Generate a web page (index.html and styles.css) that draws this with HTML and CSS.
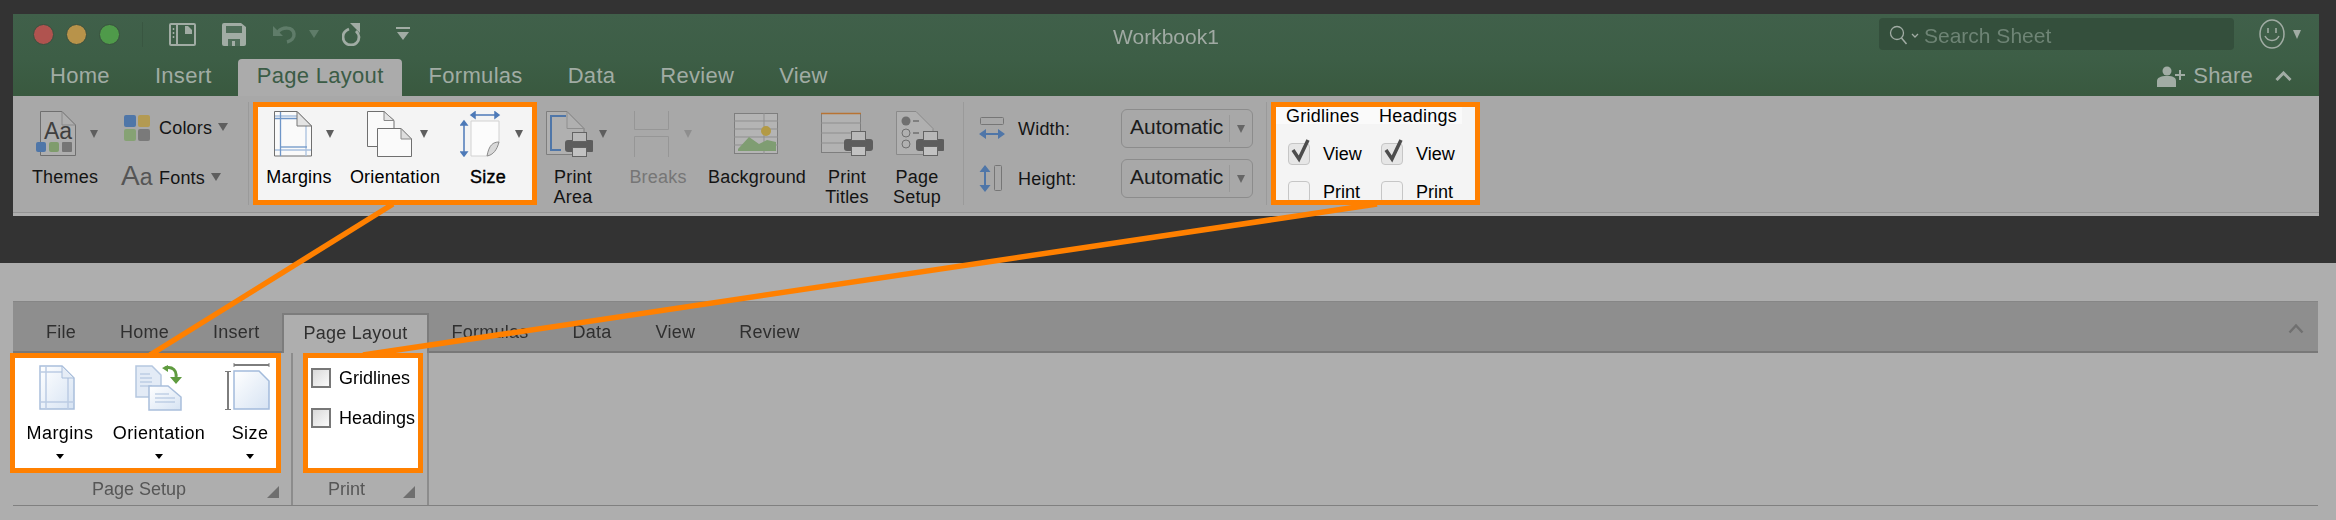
FILE: index.html
```html
<!DOCTYPE html>
<html lang="en">
<head>
<meta charset="utf-8">
<title>Excel for Mac and Windows ribbon comparison</title>
<link rel="stylesheet" href="styles.css">
</head>
<body>
<div class="page">

  <section class="mac">
    <header class="titlebar">
      <div class="title-left">
        <span class="light light-red"></span>
        <span class="light light-yellow"></span>
        <span class="light light-green"></span>
        <span class="title-divider"></span>
        <svg class="qa qa-sidebar" width="27" height="23" viewBox="0 0 27 23"><path d="M2 1h23a1 1 0 0 1 1 1v19a1 1 0 0 1-1 1H2a1 1 0 0 1-1-1V2a1 1 0 0 1 1-1z" fill="none" stroke="#a1aca4" stroke-width="2"/><path d="M8 1v21" stroke="#a1aca4" stroke-width="2"/><path d="M4.500 5v2M4.500 9v2M4.500 13v2" stroke="#a1aca4" stroke-width="1.500"/><path d="M16 3h3l4 4v4h-7z" fill="#a1aca4"/></svg>
        <svg class="qa qa-save" width="24" height="23" viewBox="0 0 24 23"><path d="M2 0h17l5 4v17a2 2 0 0 1-2 2H2a2 2 0 0 1-2-2V2a2 2 0 0 1 2-2z" fill="#a1aca4"/><rect x="4" y="3" width="16" height="7" fill="#4f6d59"/><rect x="6" y="16" width="12" height="7" fill="#4f6d59"/><rect x="10" y="18" width="3" height="5" fill="#a1aca4"/></svg>
        <svg class="qa qa-undo" width="25" height="19" viewBox="0 0 25 19"><path d="M1 1v10h10z" fill="#5f7c69"/><path d="M6 7c4-5 15-6 16 2 .5 4-3 7-7 8" fill="none" stroke="#5f7c69" stroke-width="3.500"/></svg>
        <span class="tri tri-undo"></span>
        <svg class="qa qa-redo" width="20" height="23" viewBox="0 0 20 23"><path d="M8 0h10v10z" fill="#a1aca4"/><path d="M7 6C2 8 1 11 1 14a8 8 0 0 0 16 0c0-3-2-5-3-6" fill="none" stroke="#a1aca4" stroke-width="2.800"/></svg>
        <svg class="qa qa-custom" width="14" height="14" viewBox="0 0 14 14"><path d="M0 1h14" stroke="#a1aca4" stroke-width="2"/><path d="M1 5h12l-6 8z" fill="#a1aca4"/></svg>
      </div>
      <div class="doc-title">Workbook1</div>
      <div class="title-right">
        <div class="search">
          <svg class="search-glass" width="20" height="20" viewBox="0 0 20 20"><circle cx="8" cy="8" r="6.500" fill="none" stroke="#a1aca4" stroke-width="1.300"/><path d="M12.500 13l5 6" stroke="#a1aca4" stroke-width="1.500"/></svg>
          <svg class="search-chev" width="8" height="6" viewBox="0 0 8 6"><path d="M1 1l3 3 3-3" fill="none" stroke="#a1aca4" stroke-width="1.300"/></svg>
          <span class="search-text">Search Sheet</span>
        </div>
        <svg class="smiley" width="26" height="30" viewBox="0 0 26 30"><ellipse cx="13" cy="15" rx="12" ry="14" fill="none" stroke="#a1aca4" stroke-width="1.500"/><path d="M9 9v5M17 9v5" stroke="#a1aca4" stroke-width="1.600"/><path d="M6 17c3 6 11 6 14 0" fill="none" stroke="#a1aca4" stroke-width="1.500"/></svg>
        <span class="tri tri-smiley"></span>
      </div>
    </header>

    <nav class="mac-tabs">
      <span class="mac-tab">Home</span>
      <span class="mac-tab">Insert</span>
      <span class="mac-tab mac-tab-active">Page Layout</span>
      <span class="mac-tab">Formulas</span>
      <span class="mac-tab">Data</span>
      <span class="mac-tab">Review</span>
      <span class="mac-tab">View</span>
      <div class="share">
        <svg width="28" height="21" viewBox="0 0 28 21"><circle cx="10" cy="5" r="4.500" fill="#a1aca4"/><path d="M0 21v-6c0-3 3-5 10-5s9 2 9 5v6z" fill="#a1aca4"/><path d="M18 9h10M23 4v10" stroke="#a1aca4" stroke-width="2"/></svg>
        <span class="share-text">Share</span>
        <svg class="share-chev" width="17" height="10" viewBox="0 0 17 10"><path d="M1.500 9l7-7 7 7" fill="none" stroke="#a1aca4" stroke-width="3"/></svg>
      </div>
    </nav>

    <div class="ribbon">
      <div class="themes-group">
        <div class="tool tool-themes">
          <div class="tool-art">
            <svg width="40" height="46" viewBox="0 0 40 46"><path d="M4.500.5H26L39.500 14v30.500h-35z" fill="#aeaeae" stroke="#6f6f6f"/><path d="M26 .5V14h13.500" fill="none" stroke="#8a8a8a"/><text x="8" y="28" class="svg-aa">Aa</text><rect x="0" y="31" width="10" height="10" rx="2" fill="#4f76a8"/><rect x="13" y="31" width="10" height="10" rx="2" fill="#7f9c6c"/><rect x="26" y="31" width="10" height="10" rx="1" fill="#767676"/></svg>
            <span class="tri"></span>
          </div>
          <div class="tool-label">Themes</div>
        </div>
        <div class="theme-rows">
          <div class="theme-row">
            <span class="theme-icon">
              <svg width="26" height="26" viewBox="0 0 26 26"><rect width="12" height="12" rx="2" fill="#4f76a8"/><rect x="14" width="12" height="12" rx="2" fill="#b39a52"/><rect y="14" width="12" height="12" rx="2" fill="#86a274"/><rect x="14" y="14" width="12" height="12" rx="2" fill="#7a7a7a"/></svg>
            </span>
            <span class="theme-text">Colors</span><span class="tri tri-small"></span>
          </div>
          <div class="theme-row">
            <span class="theme-icon theme-aa"><span class="aa-big">A</span><span class="aa-small">a</span></span>
            <span class="theme-text">Fonts</span><span class="tri tri-small"></span>
          </div>
        </div>
      </div>
      <span class="vsep"></span>

      <div class="hl hl-page">
        <div class="tool tool-margins">
          <div class="tool-art">
            <svg width="38" height="46" viewBox="0 0 38 46"><path d="M.5.500H23L37.500 15v30H.500z" fill="#fafafa" stroke="#6f6f6f"/><path d="M1 5h23M1 39h36" stroke="#a9c1df" stroke-width="1.500"/><path d="M1 7.500h24" stroke="#6f96c8" stroke-width="1.500"/><path d="M6.500 1v44" stroke="#6f96c8" stroke-width="1.300"/><path d="M32 15v30" stroke="#a9c1df" stroke-width="1.300"/><path d="M6 36h27" stroke="#6f96c8" stroke-width="1.300"/><path d="M23 .5v14.500h14.500z" fill="#e4e4e4" stroke="#777"/></svg>
            <span class="tri"></span>
          </div>
          <div class="tool-label">Margins</div>
        </div>
        <div class="tool tool-orient">
          <div class="tool-art">
            <svg width="45" height="46" viewBox="0 0 45 46"><path d="M.5.500H17l10 9v26H.500z" fill="#fafafa" stroke="#6f6f6f"/><path d="M17 .5v9h10z" fill="#e4e4e4" stroke="#888"/><path d="M10.500 17.500H34l10.500 10.500v17.500H10.500z" fill="#fafafa" stroke="#6f6f6f"/><path d="M34 17.500V28h10.500z" fill="#dedede" stroke="#888"/></svg>
            <span class="tri"></span>
          </div>
          <div class="tool-label">Orientation</div>
        </div>
        <div class="tool tool-size">
          <div class="tool-art">
            <svg width="46" height="46" viewBox="0 0 46 46"><path d="M11 4h28M11 4l4-3v6zM39 4l-4-3v6z" fill="#4d7ab8" stroke="#4d7ab8" stroke-width="1.500"/><path d="M4 10v35M4 10l-3 4h6zM4 45l-3-4h6z" fill="#4d7ab8" stroke="#4d7ab8" stroke-width="1.500"/><path d="M11 10h28v21L27 45H11z" fill="#fcfcfc" stroke="#d2d2d2"/><path d="M39 31c-6 0-10 3-12 14 6-1 10-6 12-14z" fill="#d8d8d8" stroke="#8a8a8a"/></svg>
            <span class="tri"></span>
          </div>
          <div class="tool-label tool-label-strong">Size</div>
        </div>
      </div>

      <div class="tool tool-parea">
        <div class="tool-art">
          <svg width="47" height="46" viewBox="0 0 47 46"><path d="M.5.500H21l17 17v26H.500z" fill="#b0b0b0" stroke="#7e7e7e"/><path d="M21 .5v17h17" fill="none" stroke="#8e8e8e"/><path d="M20 5H5v34h10" fill="none" stroke="#4f76a8" stroke-width="2"/><use href="#printer" x="19" y="21"/></svg>
          <span class="tri"></span>
        </div>
        <div class="tool-label">Print<br>Area</div>
      </div>
      <div class="tool tool-breaks">
        <div class="tool-art">
          <svg width="36" height="46" viewBox="0 0 36 46"><path d="M.5 0v18.500h34V0" fill="none" stroke="#969696"/><path d="M.5 46V25.500h34V46" fill="none" stroke="#969696"/></svg>
          <span class="tri tri-dim"></span>
        </div>
        <div class="tool-label tool-label-dim">Breaks</div>
      </div>
      <div class="tool tool-bg">
        <div class="tool-art">
          <svg width="45" height="42" viewBox="0 0 45 42"><rect x=".5" y=".5" width="43" height="40" fill="#b4b4b4" stroke="#7e7e7e"/><path d="M0 8h44M0 16h44M0 24h44M0 32h44M30 0v41" stroke="#8f8f8f"/><path d="M4 36l11-12 10 7 8-4 9 2v9H4z" fill="#7f9d72"/><circle cx="32" cy="18" r="5" fill="#b39a45"/></svg>
        </div>
        <div class="tool-label">Background</div>
      </div>
      <div class="tool tool-ptitles">
        <div class="tool-art">
          <svg width="52" height="46" viewBox="0 0 52 46"><rect x=".5" y="2.500" width="39" height="39" fill="#b2b2b2" stroke="#7e7e7e"/><path d="M0 2.500h40" stroke="#b87333" stroke-width="1.500"/><path d="M0 12h40M0 22h40M0 32h40" stroke="#8e8e8e"/><use href="#printer" x="23" y="20"/></svg>
        </div>
        <div class="tool-label">Print<br>Titles</div>
      </div>
      <div class="tool tool-psetup">
        <div class="tool-art">
          <svg width="48" height="46" viewBox="0 0 48 46"><path d="M.5.500H20l17 17v26H.500z" fill="#b0b0b0" stroke="#8a8a8a"/><circle cx="10" cy="10" r="4.500" fill="#6f6f6f"/><circle cx="10" cy="22" r="4" fill="none" stroke="#6f6f6f"/><circle cx="10" cy="33" r="4" fill="none" stroke="#6f6f6f"/><path d="M17 10h6M17 22h6" stroke="#6f6f6f" stroke-width="1.500"/><use href="#printer" x="20" y="20"/></svg>
        </div>
        <div class="tool-label">Page<br>Setup</div>
      </div>
      <span class="vsep vsep-size"></span>

      <div class="size-group">
        <div class="size-row">
          <svg width="26" height="23" viewBox="0 0 26 23"><rect x="1.500" y=".5" width="23" height="7" rx="1" fill="none" stroke="#767676"/><path d="M3 17h20" stroke="#4f76a8" stroke-width="2"/><path d="M0 17l7-5v10zM26 17l-7-5v10z" fill="#4f76a8"/></svg>
          <span class="size-label">Width:</span>
          <div class="select"><span class="select-text">Automatic</span><span class="tri"></span></div>
        </div>
        <div class="size-row">
          <svg width="24" height="27" viewBox="0 0 24 27"><path d="M6 3v21" stroke="#4f76a8" stroke-width="2"/><path d="M6 0L.5 7h11zM6 27L.5 20h11z" fill="#4f76a8"/><rect x="15.500" y=".5" width="7" height="25" rx="1" fill="none" stroke="#767676"/></svg>
          <span class="size-label">Height:</span>
          <div class="select"><span class="select-text">Automatic</span><span class="tri"></span></div>
        </div>
      </div>
      <span class="vsep vsep-sheet"></span>

      <div class="hl hl-sheet">
        <div class="sheet-grid">
          <div class="sheet-head">Gridlines</div>
          <div class="sheet-head">Headings</div>
          <div class="sheet-check"><span class="mac-box mac-box-on"><svg width="26" height="26" viewBox="0 0 26 26"><path d="M5 12l6 9L20 2" fill="none" stroke="#4d4d4d" stroke-width="3.500"/></svg></span>View</div>
          <div class="sheet-check"><span class="mac-box mac-box-on"><svg width="26" height="26" viewBox="0 0 26 26"><path d="M5 12l6 9L20 2" fill="none" stroke="#4d4d4d" stroke-width="3.500"/></svg></span>View</div>
          <div class="sheet-check"><span class="mac-box"></span>Print</div>
          <div class="sheet-check"><span class="mac-box"></span>Print</div>
        </div>
      </div>
    </div>
    <div class="ribbon-foot"></div>
  </section>

  <section class="win">
    <nav class="win-tabs">
      <span class="win-tab">File</span>
      <span class="win-tab">Home</span>
      <span class="win-tab">Insert</span>
      <span class="win-tab win-tab-active">Page Layout</span>
      <span class="win-tab">Formulas</span>
      <span class="win-tab">Data</span>
      <span class="win-tab">View</span>
      <span class="win-tab">Review</span>
      <svg class="win-chev" width="16" height="11" viewBox="0 0 16 11"><path d="M1.500 9.500L8 2.500l6.500 7" fill="none" stroke="#707070" stroke-width="2.500"/></svg>
    </nav>
    <div class="win-ribbon">
      <div class="win-group win-group-setup">
        <div class="hl hl-win hl-win-setup">
          <div class="win-tool win-margins">
            <svg width="36" height="46" viewBox="0 0 36 46"><defs><linearGradient id="paper" x1="0" y1="0" x2="1" y2="1"><stop offset="0" stop-color="#ffffff"/><stop offset="1" stop-color="#d6e3f3"/></linearGradient></defs><path d="M1 1h22l12 12v31H1z" fill="url(#paper)" stroke="#a9bedb" stroke-width="1.500"/><path d="M7 1v43M29 13v31M1 7h22M1 37h34" stroke="#bccce3" stroke-width="1.500"/><path d="M23 1v12h12z" fill="#e6edf6" stroke="#a9bedb"/></svg>
            <div class="win-label">Margins</div>
            <span class="win-tri"></span>
          </div>
          <div class="win-tool win-orient">
            <svg width="48" height="46" viewBox="0 0 48 46"><path d="M1 1h16l9 9v22H1z" fill="#e3ebf6" stroke="#b5c7e0" stroke-width="1.500"/><path d="M5 9h10M5 13h12M5 17h12M5 21h12" stroke="#a9bedb"/><path d="M14 21h19l13 11v13H14z" fill="url(#paper)" stroke="#a9bedb" stroke-width="1.500"/><path d="M20 29h14M20 33h20M20 37h20" stroke="#a9bedb"/><path d="M30 3c8-2 12 3 11 9" fill="none" stroke="#5f9b3f" stroke-width="3"/><path d="M33 0l-6 3 6 4zM35 12h12l-6 7z" fill="#5f9b3f"/></svg>
            <div class="win-label">Orientation</div>
            <span class="win-tri"></span>
          </div>
          <div class="win-tool win-size">
            <svg width="46" height="48" viewBox="0 0 46 48"><path d="M9 2h35" stroke="#7d7d7d" stroke-width="2"/><path d="M9 0v4M44 0v4" stroke="#7d7d7d"/><path d="M3 9v37" stroke="#7d7d7d" stroke-width="2"/><path d="M0 8.500h6M0 46.500h6" stroke="#7d7d7d"/><path d="M9 8h25l10 10v28H9z" fill="url(#paper)" stroke="#a3bbdb" stroke-width="1.500"/></svg>
            <div class="win-label">Size</div>
            <span class="win-tri"></span>
          </div>
        </div>
        <div class="win-caption caption-setup"><span>Page Setup</span><span class="corner"></span></div>
      </div>
      <div class="win-group win-group-print">
        <div class="hl hl-win hl-win-print">
          <div class="win-check"><span class="win-box"></span>Gridlines</div>
          <div class="win-check"><span class="win-box"></span>Headings</div>
        </div>
        <div class="win-caption caption-print"><span>Print</span><span class="corner"></span></div>
      </div>
    </div>
  </section>

  <svg class="callouts" width="2336" height="520" viewBox="0 0 2336 520">
    <defs>
      <symbol id="printer" width="29" height="25" viewBox="0 0 29 25">
        <rect x="0" y="8" width="29" height="12" rx="3" fill="#5d5d5d"/>
        <rect x="7.500" y=".5" width="14" height="9" fill="#b8b8b8" stroke="#636363"/>
        <rect x="7.500" y="15.500" width="14" height="9" fill="#c2c2c2" stroke="#636363"/>
      </symbol>
    </defs>
    <path d="M393 204L150 355" class="callout-line"/>
    <path d="M1377 204L363 355" class="callout-line"/>
  </svg>
</div>
</body>
</html>
```
FILE: styles.css
```css
* { box-sizing: border-box; }
html, body { margin: 0; padding: 0; }
body { width: 2336px; height: 520px; overflow: hidden; background: #333; font-family: "Liberation Sans", Arial, sans-serif; color: #141414; }
.page { position: relative; width: 2336px; height: 520px; overflow: hidden; filter: blur(.4px); }

.mac { margin: 14px 17px 0 13px; height: 202px; display: flex; flex-direction: column; }
.titlebar { height: 45px; flex: none; background: linear-gradient(#40604a, #3d5e46); display: grid; grid-template-columns: 1fr auto 1fr; align-items: center; }
.title-left { display: flex; align-items: center; padding: 0 0 5px 20px; }
.light { width: 21px; height: 21px; border-radius: 50%; margin-right: 12px; border: 1px solid #39503f; }
.light-red { background: #b0534f; }
.light-yellow { background: #b8934a; }
.light-green { background: #4f9a4a; }
.title-divider { width: 1px; height: 25px; background: #395641; margin-left: 10px; }
.qa { display: block; flex: none; }
.qa-sidebar { margin-left: 26px; }
.qa-save { margin-left: 26px; }
.qa-undo { margin-left: 26px; }
.qa-redo { margin-left: 23px; }
.qa-custom { margin-left: 34px; }
.tri { display: block; flex: none; width: 0; height: 0; margin: 0 1.500px; border-left: 4.500px solid transparent; border-right: 4.500px solid transparent; border-top: 8px solid #5e5e5e; }
.tri-small { margin: 0 0 2px 6px; border-left-width: 5px; border-right-width: 5px; border-top-width: 8px; }
.tri-dim { border-top-color: #8e8e8e; }
.tri-undo { border-left-width: 5px; border-right-width: 5px; border-top-width: 8px; border-top-color: #5f7c69; margin: 0 0 0 12px; }
.tri-smiley { border-left-width: 4px; border-right-width: 4px; border-top-width: 9px; border-top-color: #a1aca4; margin: 0 0 0 8px; }
.doc-title { font-size: 21px; line-height: 24px; color: #a0aaa3; }
.title-right { display: flex; align-items: center; justify-content: flex-end; padding: 0 18px 5px 0; }
.search { width: 355px; height: 32px; border-radius: 4px; background: #344f3c; display: flex; align-items: center; padding-left: 10px; margin-right: 25px; }
.search-glass { display: block; margin-top: 1px; }
.search-chev { display: block; margin-left: 2px; margin-top: 3px; }
.search-text { font-size: 21px; line-height: 24px; color: #6e8475; margin-left: 5px; margin-top: 3px; }
.smiley { display: block; }

.mac-tabs { height: 37px; flex: none; background: linear-gradient(#3d5e46, #39593f); display: flex; gap: 8px; padding-left: 18.500px; }
.mac-tab { padding: 0 18.500px 3px; font-size: 22px; letter-spacing: .3px; line-height: 34px; color: #a1aca4; white-space: nowrap; }
.mac-tab-active { background: #ababab; color: #3b5c46; border-radius: 4px 4px 0 0; }
.share { margin-left: auto; display: flex; align-items: center; padding: 0 27px 3px 0; }
.share svg { display: block; }
.share-text { font-size: 22px; letter-spacing: .2px; line-height: 34px; color: #a1aca4; margin-left: 8px; }
.share-chev { margin-left: 22px; }

.ribbon { height: 116px; flex: none; background: #a8a8a8; display: flex; align-items: flex-start; padding-top: 6px; }
.ribbon-foot { height: 4px; flex: none; background: #aeaeae; border-top: 1px solid #939393; }
.vsep { width: 1px; height: 103px; background: #9a9a9a; flex: none; }
.vsep-size { margin-left: 19px; }
.vsep-sheet { margin-left: 13px; }

.themes-group { width: 235px; display: flex; flex: none; }
.theme-rows { width: 131px; display: flex; flex-direction: column; margin-top: 1px; }
.theme-row { height: 50px; display: flex; align-items: center; }
.theme-icon { width: 42px; padding-left: 7px; flex: none; display: block; }
.theme-icon svg { display: block; }
.theme-aa { padding-left: 4px; white-space: nowrap; line-height: 30px; color: #555; }
.aa-big { font-size: 28px; }
.aa-small { font-size: 23px; }
.theme-text { font-size: 18px; line-height: 22px; letter-spacing: .2px; }
.svg-aa { font-size: 23px; fill: #3f3f3f; font-family: "Liberation Sans", Arial, sans-serif; }

.tool { display: flex; flex-direction: column; padding-top: 9px; flex: none; }
.tool-art { height: 46px; display: flex; align-items: center; justify-content: space-between; margin-bottom: 10px; }
.tool-art svg { display: block; flex: none; }
.tool-label { font-size: 18px; line-height: 20px; letter-spacing: .2px; text-align: center; white-space: nowrap; }
.tool-label-strong { -webkit-text-stroke: .4px #000; }
.tool-label-dim { color: #767676; }
.tool-themes { width: 104px; }
.tool-themes .tool-art { padding: 0 18px 0 23px; }
.hl { border: 5px solid #ff8000; background: #f4f4f4; flex: none; display: flex; }
.hl .tool { padding-top: 4px; }
.hl .tool-label { color: #000; }
.hl-page { width: 284px; height: 103px; margin-left: 4px; }
.tool-margins { width: 82px; }
.tool-margins .tool-art { padding: 0 5px 0 16px; }
.tool-orient { width: 110px; }
.tool-orient .tool-art { padding: 0 21px 0 27px; }
.tool-size { width: 76px; }
.tool-size .tool-art { padding: 0 2px 0 10px; }
.tool-parea { width: 70px; margin-left: 1px; }
.tool-parea .tool-art { padding-left: 8px; }
.tool-breaks { width: 100px; }
.tool-breaks .tool-art { padding: 0 15px 0 26px; }
.tool-bg { width: 96px; }
.tool-bg .tool-art { justify-content: center; }
.tool-ptitles { width: 86px; }
.tool-ptitles .tool-art { justify-content: center; }
.tool-psetup { width: 54px; }
.tool-psetup .tool-art { padding-left: 6px; }

.size-group { display: flex; flex-direction: column; gap: 11px; padding: 7px 0 0 15px; flex: none; }
.size-row { display: grid; grid-template-columns: 39px 103px 132px; align-items: center; height: 39px; }
.size-row svg { display: block; }
.size-label { font-size: 18px; line-height: 22px; letter-spacing: .2px; }
.select { height: 39px; border: 1px solid #8c8c8c; border-radius: 6px; display: flex; align-items: center; padding-left: 8px; position: relative; }
.select-text { width: 100px; font-size: 21px; line-height: 24px; color: #1c1c1c; border-right: 1px solid #999; height: 27px; }
.select .tri { margin: 0 0 0 7px; border-top-color: #666; }

.hl-sheet { width: 209px; height: 103px; margin-left: 4px; overflow: hidden; }
.sheet-grid { display: grid; grid-template-columns: 93px 93px; grid-auto-rows: min-content; width: 100%; }
.sheet-head { height: 17px; background: #fafafa; font-size: 18px; letter-spacing: .25px; line-height: 18px; color: #000; padding-left: 10px; white-space: nowrap; }
.sheet-check { display: flex; align-items: center; height: 22px; margin-top: 19px; padding-left: 12px; font-size: 18px; line-height: 22px; color: #000; }
.sheet-check:nth-child(n+5) { margin-top: 16px; }
.mac-box { position: relative; display: block; width: 22px; height: 22px; border: 1px solid #c6c6c6; border-radius: 4px; background: #f3f3f3; margin-right: 13px; flex: none; }
.mac-box-on { background: #e6e6e6; }
.mac-box svg { position: absolute; left: -1px; top: -6px; display: block; }

.win { margin-top: 47px; height: 257px; background: #aeaeae; padding: 38px 18px 0 13px; }
.win-tabs { height: 52px; background: #8e8e8e; border-bottom: 2px solid #787878; border-top: 1px solid #868686; display: flex; align-items: flex-end; padding-left: 11px; }
.win-tab { padding: 0 22px; font-size: 18px; letter-spacing: .25px; line-height: 38px; height: 38px; color: #2f2f2f; white-space: nowrap; }
.win-tab-active { padding: 0 20px; background: #aeaeae; border: 2px solid #7c7c7c; border-bottom: 0; line-height: 36px; margin-bottom: -2px; height: 40px; }
.win-chev { display: block; margin: 0 14px 17px auto; }
.win-ribbon { height: 153px; display: flex; border-bottom: 1px solid #808080; }
.win-group { flex: none; border-right: 2px solid #8c8c8c; display: flex; flex-direction: column; }
.win-group-setup { width: 280px; }
.win-group-print { width: 136px; }
.hl-win { height: 120px; flex: none; background: #fff; margin-top: 0; }
.hl-win-setup { width: 271px; margin-left: -3px; }
.hl-win-print { width: 120px; margin-left: 10px; flex-direction: column; padding: 10px 0 0 3px; gap: 20px; }
.win-tool { display: flex; flex-direction: column; align-items: center; padding-top: 7px; flex: none; }
.win-tool svg { display: block; height: 46px; }
.win-margins { width: 90px; }
.win-margins svg { margin-left: -6px; }
.win-orient { width: 108px; }
.win-size { width: 52px; margin-left: 11px; padding-top: 5px; }
.win-size svg { height: 48px; margin-left: -4px; }
.win-label { font-size: 18px; letter-spacing: .4px; line-height: 20px; color: #000; margin-top: 12px; white-space: nowrap; }
.win-tri { display: block; margin-top: 11px; width: 0; height: 0; border-left: 4px solid transparent; border-right: 4px solid transparent; border-top: 5px solid #000; }
.win-check { display: flex; align-items: center; height: 20px; font-size: 18px; line-height: 20px; color: #000; white-space: nowrap; }
.win-box { display: block; width: 20px; height: 20px; border: 2px solid #777; background: linear-gradient(135deg, #d9d9d9, #fafafa); margin-right: 8px; flex: none; }
.win-caption { height: 32px; display: flex; align-items: center; justify-content: space-between; font-size: 18px; line-height: 32px; color: #565656; }
.caption-setup { padding: 0 12px 0 79px; }
.caption-print { padding: 0 12px 0 35px; }
.corner { display: block; width: 0; height: 0; margin-top: 6px; border-left: 12px solid transparent; border-bottom: 12px solid #6f6f6f; }

.callouts { position: absolute; left: 0; top: 0; display: block; pointer-events: none; }
.callout-line { stroke: #ff8000; stroke-width: 5.500; fill: none; }
```
